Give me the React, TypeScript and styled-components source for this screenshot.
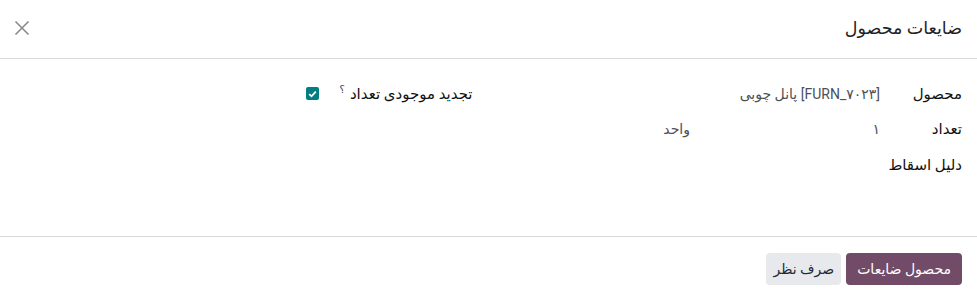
import { styled, createGlobalStyle } from "styled-components";

const GlobalStyle = createGlobalStyle`
  html, body {
    margin: 0;
    padding: 0;
    background: #ffffff;
  }
  body {
    font-family: Roboto, "DejaVu Sans", sans-serif;
    font-size: 14px;
    color: #212529;
  }
`;

const App = () => {
  return (
    <>
      <GlobalStyle />
      <Dialog dir="rtl">
        <Header>
          <Title>ضایعات محصول</Title>
          <CloseButton aria-label="بستن">
            <svg width="16" height="16" viewBox="0 0 16 16">
              <path
                d="M1.5 1.5 L14.5 14.5 M14.5 1.5 L1.5 14.5"
                stroke="#8a8a8a"
                strokeWidth="1.6"
                fill="none"
              />
            </svg>
          </CloseButton>
        </Header>

        <Body>
          <Group>
            <Label>محصول</Label>
            <Value>[FURN_۷۰۲۳] پانل چوبی</Value>

            <Label>تعداد</Label>
            <QuantityCell>
              <Quantity>۱</Quantity>
              <Value>واحد</Value>
            </QuantityCell>

            <Label>دلیل اسقاط</Label>
            <Value />
          </Group>

          <Group $labelWidth="154px">
            <Label>
              تجدید موجودی تعداد<Help>؟</Help>
            </Label>
            <CheckCell>
              <CheckBox>
                <svg width="9" height="8" viewBox="0 0 9 8">
                  <path
                    d="M1.2 4.2 L3.5 6.3 L7.8 1.6"
                    stroke="#ffffff"
                    strokeWidth="1.8"
                    fill="none"
                  />
                </svg>
              </CheckBox>
            </CheckCell>
          </Group>
        </Body>

        <Footer>
          <Button $primary>محصول ضایعات</Button>
          <Button>صرف نظر</Button>
        </Footer>
      </Dialog>
    </>
  );
};

export default App;

const Dialog = styled("div")({
  width: "977px",
  height: "300px",
  display: "flex",
  flexDirection: "column",
  background: "#ffffff",
  boxSizing: "border-box",
});

const Header = styled("div")({
  height: "59px",
  boxSizing: "border-box",
  display: "flex",
  alignItems: "center",
  justifyContent: "space-between",
  padding: "0 15px 2px 12px",
  borderBottom: "1px solid #d8dadd",
});

const Title = styled("h4")({
  margin: 0,
  fontSize: "17.5px",
  fontWeight: 400,
  color: "#1f2328",
});

const CloseButton = styled("button")({
  border: "none",
  background: "transparent",
  padding: "2px",
  display: "flex",
  cursor: "pointer",
});

const Body = styled("div")({
  flex: 1,
  display: "grid",
  gridTemplateColumns: "1fr 1fr",
  columnGap: "33px",
  padding: "17px 15px 0 16px",
  alignContent: "start",
});

const Group = styled("div")<{ $labelWidth?: string }>(({ $labelWidth }) => ({
  display: "grid",
  gridTemplateColumns: `${$labelWidth ?? "82px"} 1fr`,
  gridAutoRows: "35.5px",
  alignItems: "center",
}));

const Label = styled("div")({
  fontWeight: 400,
  color: "#111111",
  fontSize: "15px",
  whiteSpace: "nowrap",
});

const Help = styled("sup")({
  fontSize: "10px",
  color: "#374151",
  marginRight: "5px",
});

const Value = styled("div")({
  color: "#4b5057",
  fontSize: "14px",
});

const QuantityCell = styled("div")({
  display: "flex",
  alignItems: "center",
});

const Quantity = styled("div")({
  width: "190px",
  color: "#4b5057",
});

const CheckCell = styled("div")({
  display: "flex",
  alignItems: "center",
});

const CheckBox = styled("span")({
  width: "13px",
  height: "13px",
  borderRadius: "2px",
  background: "#017e84",
  display: "inline-flex",
  alignItems: "center",
  justifyContent: "center",
});

const Footer = styled("div")({
  height: "64px",
  boxSizing: "border-box",
  borderTop: "1px solid #d8dadd",
  display: "flex",
  alignItems: "center",
  gap: "5px",
  padding: "0 15px",
});

const Button = styled("button")<{ $primary?: boolean }>(({ $primary }) => ({
  height: "32px",
  border: "none",
  borderRadius: "4px",
  padding: $primary ? "0 11px" : "0 7px",
  fontFamily: "inherit",
  fontSize: "14px",
  fontWeight: 400,
  cursor: "pointer",
  background: $primary ? "#714b67" : "#e7e9ed",
  color: $primary ? "#ffffff" : "#1f2937",
}));
